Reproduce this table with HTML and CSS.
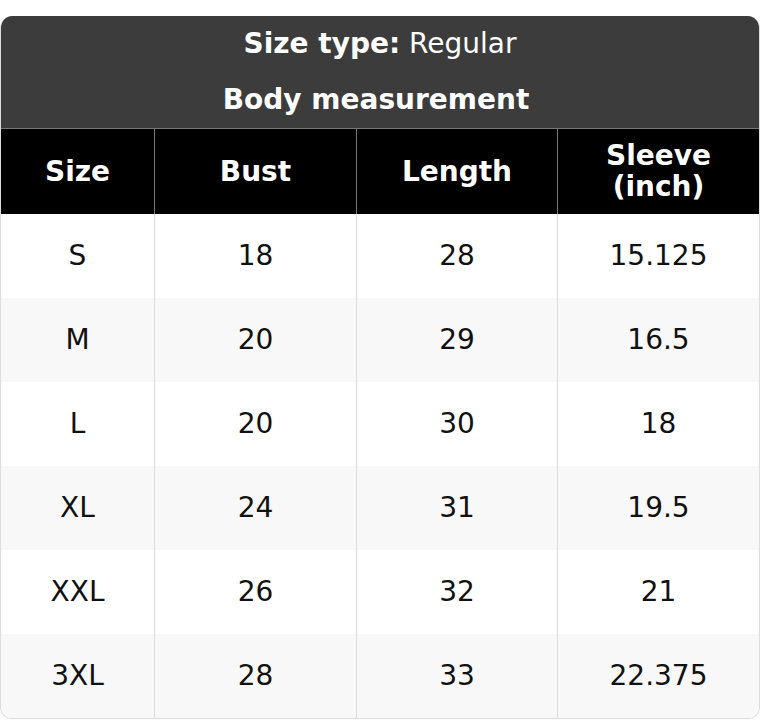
FILE: index.html
```html
<!DOCTYPE html>
<html>
<head>
<meta charset="utf-8">
<link rel="stylesheet" href="styles.css">
</head>
<body>
<div class="card">
  <div class="title">
    <div class="title-line"><b>Size type:</b> Regular</div>
    <div class="title-line title-sub"><b>Body measurement</b></div>
  </div>
  <table class="chart">
    <colgroup>
      <col class="c1"><col class="c2"><col class="c3"><col class="c4">
    </colgroup>
    <thead>
      <tr><th>Size</th><th>Bust</th><th>Length</th><th>Sleeve<br>(inch)</th></tr>
    </thead>
    <tbody>
      <tr><td>S</td><td>18</td><td>28</td><td>15.125</td></tr>
      <tr><td>M</td><td>20</td><td>29</td><td>16.5</td></tr>
      <tr><td>L</td><td>20</td><td>30</td><td>18</td></tr>
      <tr><td>XL</td><td>24</td><td>31</td><td>19.5</td></tr>
      <tr><td>XXL</td><td>26</td><td>32</td><td>21</td></tr>
      <tr><td>3XL</td><td>28</td><td>33</td><td>22.375</td></tr>
    </tbody>
  </table>
</div>
</body>
</html>
```
FILE: styles.css
```css
html, body {
  margin: 0;
  padding: 0;
  background: #ffffff;
}
body {
  padding-top: 16px;
  font-family: "DejaVu Sans", sans-serif;
}
.card {
  width: 760px;
  box-sizing: border-box;
  border: 1px solid #dddddd;
  border-top: none;
  border-radius: 12px;
  overflow: hidden;
}
.title {
  background: #3c3c3c;
  color: #ffffff;
  text-align: center;
  font-size: 28px;
  border-bottom: 1px solid #777777;
}
.title-line {
  height: 56px;
  line-height: 55px;
}
.title-sub {
  padding-right: 8px;
}
.chart {
  width: 100%;
  border-collapse: separate;
  border-spacing: 0;
  table-layout: fixed;
}
.c1 { width: 153px; }
.c2 { width: 202px; }
.c3 { width: 201px; }
.c4 { width: auto; }
.chart th {
  background: #000000;
  color: #ffffff;
  font-size: 28px;
  font-weight: bold;
  height: 84px;
  line-height: 31px;
  padding: 0 0 1px;
  border-left: 1px solid #777777;
}
.chart td {
  height: 83px;
  padding: 0 0 1px;
  text-align: center;
  font-size: 28px;
  color: #111111;
  border-left: 1px solid #dddddd;
}
.chart th:first-child, .chart td:first-child {
  border-left: none;
}
.chart tbody tr:nth-child(even) td {
  background: #f8f8f8;
}
```
